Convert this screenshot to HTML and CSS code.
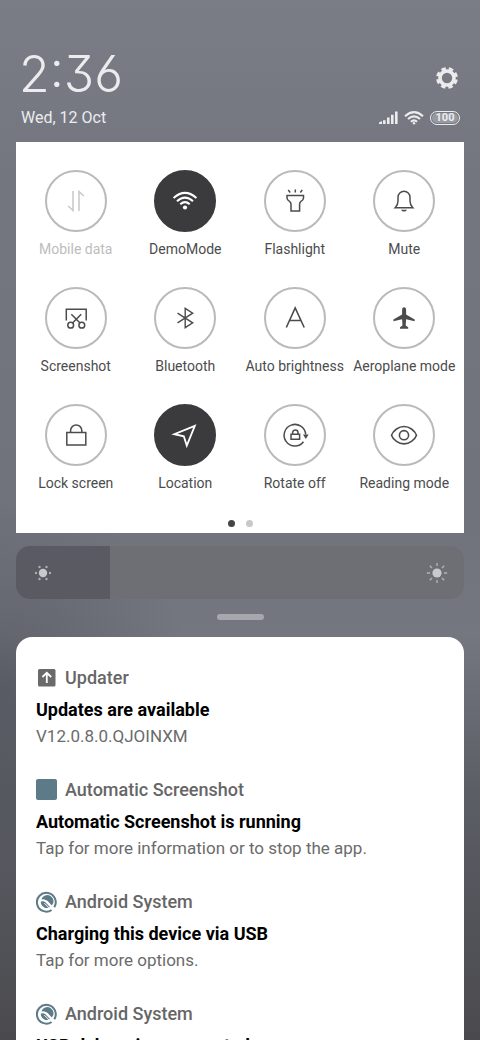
FILE: index.html
```html
<!DOCTYPE html>
<html lang="en">
<head>
<meta charset="utf-8">
<meta name="viewport" content="width=device-width, initial-scale=1">
<title>Control centre</title>
<link rel="stylesheet" href="styles.css">
</head>
<body>
<svg class="defs" aria-hidden="true">
  <symbol id="android-q" viewBox="0 0 22 22">
    <path d="M18.3 16.2A9.4 9.4 0 1 0 15.6 19" fill="none" stroke="currentColor" stroke-width="2"/>
    <path d="M5.4 8.6A6.2 6.2 0 1 1 15.8 14.6L11.4 9.8Q8 7.4 5.4 8.6Z" fill="currentColor"/>
    <path d="M4.8 10.6Q7.4 9.6 9.6 11.4L14 16Q11.4 17.6 8.4 16.4Q4.6 14.6 4.8 10.6Z" fill="currentColor"/>
    <path d="M8.4 12.2L13.4 17.2" fill="none" stroke="#fff" stroke-width="1"/>
  </symbol>
</svg>
<main class="shade">
  <header class="top">
    <div class="row">
      <time class="clock" datetime="14:36">2:36</time>
      <button class="settings" aria-label="Settings">
        <svg viewBox="0 0 24 24" width="24" height="24"><circle cx="12" cy="12" r="7" fill="none" stroke="currentColor" stroke-width="3.6"/><circle cx="12" cy="12" r="9.4" fill="none" stroke="currentColor" stroke-width="3" stroke-dasharray="4.4 2.983" stroke-dashoffset="-1.5"/></svg>
      </button>
    </div>
    <div class="row">
      <span class="date">Wed, 12 Oct</span>
      <div class="status">
        <svg viewBox="0 0 19 14" width="19" height="14" fill="currentColor"><path d="M0 11.5L3 10V13H0ZM4 9.2H6.6V13H4ZM8 6.6H10.6V13H8ZM12 3.8H14.6V13H12ZM16 .5H18.6V13H16Z"/></svg>
        <svg viewBox="0 0 20 14" width="20" height="14" fill="none" stroke="currentColor" stroke-width="2.1"><path d="M1 5.2Q10-2.8 19 5.2M4 8.1Q10 2.6 16 8.1M6.9 10.7Q10 8 13.1 10.7"/><circle cx="10" cy="12.3" r="1.2" fill="currentColor" stroke="none"/></svg>
        <span class="battery"><span class="charge">100</span></span>
      </div>
    </div>
  </header>

  <section class="panel" aria-label="Quick settings">
    <div class="tiles">
      <button class="tile disabled"><span class="disc"><svg viewBox="0 0 32 32" fill="none" stroke="currentColor" stroke-width="1.5"><path d="M13 6V25.5L8.2 21M19 26V6.5L23.8 11"/></svg></span>Mobile data</button>
      <button class="tile on"><span class="disc"><svg viewBox="0 0 32 32" fill="none" stroke="currentColor" stroke-width="2"><path d="M4.6 13Q16 2.8 27.4 13M8 16.2Q16 9 24 16.2M11.3 19.3Q16 15 20.7 19.3"/><circle cx="16" cy="22.5" r="2.1" fill="currentColor" stroke="none"/></svg></span>DemoMode</button>
      <button class="tile"><span class="disc"><svg viewBox="0 0 32 32" fill="none" stroke="currentColor" stroke-width="1.5"><path d="M8 10.5H24.5V13Q24.5 15 22 16.4Q20.6 17.4 20.6 19V26H12V19Q12 17.4 10.5 16.4Q8 15 8 13Z M9.2 5L11.2 7.5M16.3 4.5V7.5M23.3 5L21.3 7.5"/></svg></span>Flashlight</button>
      <button class="tile"><span class="disc"><svg viewBox="0 0 32 32" fill="none" stroke="currentColor" stroke-width="1.5"><path d="M7.2 22.7Q10 20 10 16V12.2A6 6 0 0 1 22 12.2V16Q22 20 24.8 22.7Z"/><path d="M13 24.7H19Q18 26.6 16 26.6T13 24.7Z" fill="currentColor" stroke="none"/></svg></span>Mute</button>
      <button class="tile"><span class="disc"><svg viewBox="0 0 32 32" fill="none" stroke="currentColor" stroke-width="1.5"><path d="M6.3 18.5V7.3H26.2V18.5M11.3 12.2L20.3 21.2M21.2 12.2L12.3 21.2"/><circle cx="10.7" cy="23.2" r="2.9"/><circle cx="21.8" cy="23.2" r="2.9"/></svg></span>Screenshot</button>
      <button class="tile"><span class="disc"><svg viewBox="0 0 32 32" fill="none" stroke="currentColor" stroke-width="1.4"><path d="M8.5 11.2L23.7 20.8L16.2 25.7V6.3L23.7 11.2L8.5 20.8"/></svg></span>Bluetooth</button>
      <button class="tile"><span class="disc"><svg viewBox="0 0 32 32" fill="none" stroke="currentColor" stroke-width="1.6"><path d="M7.3 25.5L16.2 6L25.2 25.5M10.4 18.5H22"/></svg></span>Auto brightness</button>
      <button class="tile"><span class="disc"><svg viewBox="0 0 32 32" fill="currentColor"><path d="M16.1 5.2Q18.1 5.2 18.1 8V12.6L26.7 17.4V19.2L18.1 17.2L17.7 23.4L20.2 25.2V26.8H12V25.2L14.5 23.4L14.1 17.2L5.4 19.2V17.4L14.1 12.6V8Q14.1 5.2 16.1 5.2Z"/></svg></span>Aeroplane mode</button>
      <button class="tile"><span class="disc"><svg viewBox="0 0 32 32" fill="none" stroke="currentColor" stroke-width="1.5"><path d="M6.8 13.5H25.8V26H6.8ZM10.6 13.5V11.6A5.6 5.6 0 0 1 21.8 11.6V13.5"/></svg></span>Lock screen</button>
      <button class="tile on"><span class="disc"><svg viewBox="0 0 32 32" fill="none" stroke="currentColor" stroke-width="1.8"><path d="M25.8 6.8L5.3 15.2L14.8 17.3L17.8 26.6Z"/></svg></span>Location</button>
      <button class="tile"><span class="disc"><svg viewBox="0 0 32 32" fill="none" stroke="currentColor" stroke-width="1.5"><path d="M24.5 22.8A10.8 10.8 0 1 1 26.7 15.5"/><path d="M24 15.5H29.6L26.8 20Z" fill="currentColor" stroke="none"/><path d="M12 15.2H20.6V20.2H12ZM13.6 15V13.6A2.7 2.7 0 0 1 19 13.6V15"/></svg></span>Rotate off</button>
      <button class="tile"><span class="disc"><svg viewBox="0 0 32 32" fill="none" stroke="currentColor" stroke-width="1.6"><path d="M3.5 16.2Q4.6 12.8 8.5 10Q12 7.5 16 7.5T23.5 10Q27.4 12.8 28.5 16.2Q27.4 19.6 23.5 22.4Q20 24.9 16 24.9T8.5 22.4Q4.6 19.6 3.5 16.2Z"/><circle cx="16" cy="16.2" r="4.6"/></svg></span>Reading mode</button>
    </div>
    <div class="pages"><span class="dot current"></span><span class="dot"></span></div>
  </section>

  <div class="brightness">
    <input class="slider" type="range" min="0" max="100" value="21" aria-label="Brightness">
    <svg class="sun low" viewBox="0 0 22 22" width="22" height="22" fill="currentColor"><circle cx="11" cy="11" r="4.2"/><g opacity=".75"><circle cx="4" cy="11" r="1.2"/><circle cx="18" cy="11" r="1.2"/><circle cx="7.5" cy="5" r="1.2"/><circle cx="14.5" cy="5" r="1.2"/><circle cx="7.5" cy="17" r="1.2"/><circle cx="14.5" cy="17" r="1.2"/></g></svg>
    <svg class="sun high" viewBox="0 0 22 22" width="22" height="22"><circle cx="11" cy="11" r="4.6" fill="currentColor"/><path d="M11 1V4M11 18V21M.8 11H4M18 11H21.2M3.8 3.8L6 6M16 16L18.2 18.2M3.8 18.2L6 16M16 6L18.2 3.8" stroke="currentColor" stroke-width="1.4" opacity=".75"/></svg>
  </div>
  <div class="handle"></div>

  <section class="notifications" aria-label="Notifications">
    <article class="note">
      <header class="app"><svg viewBox="0 0 22 22" width="22" height="22"><rect x="2" y="2" width="17.5" height="17.5" rx="1.5" fill="#6a6a6a"/><path d="M10.8 16V6.5M6.4 10L10.8 5.8L15.2 10" fill="none" stroke="#fff" stroke-width="1.8"/></svg>Updater</header>
      <h2 class="title">Updates are available</h2>
      <p class="text">V12.0.8.0.QJOINXM</p>
    </article>
    <article class="note">
      <header class="app"><svg viewBox="0 0 22 22" width="22" height="22"><rect width="21" height="21" rx="2" fill="#5c7a87"/></svg>Automatic Screenshot</header>
      <h2 class="title">Automatic Screenshot is running</h2>
      <p class="text">Tap for more information or to stop the app.</p>
    </article>
    <article class="note">
      <header class="app"><svg class="q" width="22" height="22"><use href="#android-q"/></svg>Android System</header>
      <h2 class="title">Charging this device via USB</h2>
      <p class="text">Tap for more options.</p>
    </article>
    <article class="note">
      <header class="app"><svg class="q" width="22" height="22"><use href="#android-q"/></svg>Android System</header>
      <h2 class="title">USB debugging connected</h2>
    </article>
  </section>
</main>
</body>
</html>
```
FILE: styles.css
```css
* { box-sizing: border-box; }
body {
  margin: 0;
  height: 100vh;
  overflow: hidden;
  font-family: Roboto, "Liberation Sans", sans-serif;
  background:
    radial-gradient(ellipse 40% 18% at 0 66%, rgba(60, 62, 70, .4), rgba(60, 62, 70, 0)),
    linear-gradient(#7a7d85, #73767f 18%, #70737b 50%, #74777f 61%, #5c5e66 76%, #4a4a4e);
}
button { border: 0; padding: 0; background: none; font: inherit; color: inherit; }
h2, p { margin: 0; }
.defs { display: none; }
.shade { padding: 48px 16px 0; }

.top { padding: 0 4px 0 5px; color: #ececef; margin-bottom: 14px; }
.row { display: flex; align-items: center; justify-content: space-between; }
.clock {
  font-family: Inter, Roboto, sans-serif;
  font-weight: 300;
  font-size: 50px;
  line-height: 52px;
  margin-left: -2px;
  font-feature-settings: "cv03", "cv09";
}
.settings { display: flex; padding-top: 8px; margin-right: 1px; }
.date { font-size: 16px; line-height: 20px; margin-top: 8px; }
.status { display: flex; align-items: center; gap: 6px; margin-top: 8px; }
.battery { border: 1px solid; border-radius: 7px; padding: 1px; }
.charge {
  display: block;
  width: 26px;
  border-radius: 5px;
  background: rgba(255, 255, 255, .25);
  font-size: 11px;
  font-weight: 700;
  line-height: 10px;
  text-align: center;
}

.panel { background: #fff; padding: 28px 5px 6px; }
.tiles { display: grid; grid-template-columns: repeat(4, 1fr); row-gap: 29px; }
.tile {
  display: flex;
  flex-direction: column;
  align-items: center;
  gap: 8px;
  color: #4c4c4e;
  font-size: 14px;
  line-height: 18px;
  white-space: nowrap;
}
.disc {
  width: 62px;
  height: 62px;
  border: 2px solid #bababa;
  border-radius: 50%;
  display: grid;
  place-items: center;
}
.disc svg { width: 32px; height: 32px; }
.on .disc { background: #3b3b3d; border-color: #3b3b3d; color: #fff; }
.disabled { color: #bdbdbd; }
.disabled .disc svg { color: #c8c8c8; }
.pages { display: flex; justify-content: center; gap: 11px; margin-top: 28px; }
.dot { width: 7px; height: 7px; border-radius: 50%; background: #c8c8c8; }
.current { background: #454547; }

.brightness { position: relative; margin-top: 13px; }
.slider {
  appearance: none;
  display: block;
  width: 100%;
  height: 53px;
  margin: 0;
  border-radius: 14px;
  background: linear-gradient(90deg, #5a5a63 21%, #6d6f75 21%);
}
.slider::-webkit-slider-thumb { appearance: none; width: 1px; height: 53px; }
.sun { position: absolute; top: 16px; color: #c9c9cd; pointer-events: none; }
.low { left: 16px; }
.high { right: 16px; }
.handle { width: 47px; height: 6px; border-radius: 3px; background: #a7a8ad; margin: 15px auto 17px; }

.notifications {
  background: #fff;
  border-radius: 16px 16px 0 0;
  padding: 29px 20px;
  display: grid;
  gap: 28px;
}
.app { display: flex; align-items: center; gap: 7px; margin-bottom: 6px; font-size: 18px; line-height: 24px; font-weight: 500; color: #666; }
.q { color: #5c7a87; }
.title { font-size: 18px; line-height: 27px; font-weight: 700; color: #000; }
.text { font-size: 17px; line-height: 27px; color: #6b6b6b; }
```
